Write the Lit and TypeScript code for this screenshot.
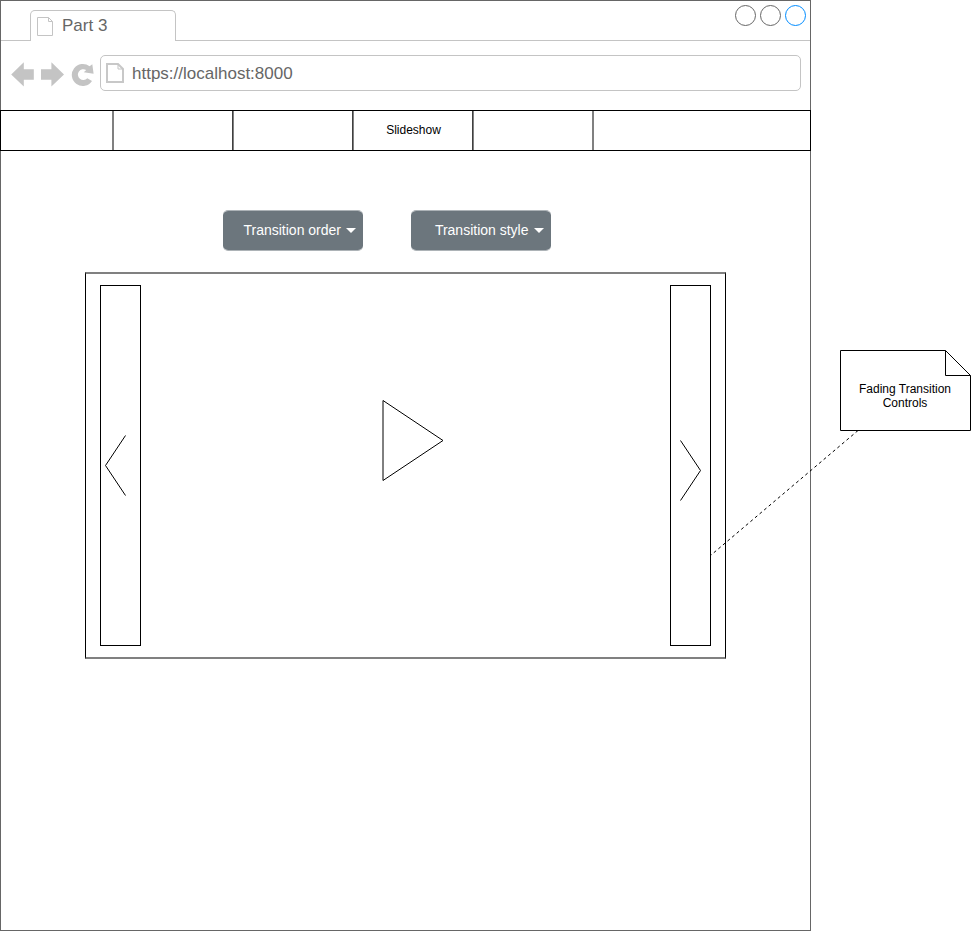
import { LitElement, html, css } from "lit";
import { customElement, property } from "lit/decorators.js";

@customElement("page-icon")
class PageIcon extends LitElement {
  @property({ type: Boolean }) bold = false;
  static styles = css`
    :host { display: block; line-height: 0; }
    svg { display: block; overflow: visible; }
    path { fill: none; stroke: #c4c4c4; }
    .heavy { stroke: #c8c8c8; }
  `;
  render() {
    return this.bold
      ? html`<svg width="18" height="20"><path class="heavy" stroke-width="2" d="M1 1H12L17 6V19H1Z"></path><path d="M12 1V6H17"></path></svg>`
      : html`<svg width="16" height="19"><path d="M.5 .5H11.5L15.5 4.5V18.5H.5ZM11.5 .5V4.5H15.5"></path></svg>`;
  }
}

@customElement("drop-button")
class DropButton extends LitElement {
  @property() label = "";
  static styles = css`
    :host { display: flex; box-sizing: border-box; width: 140px; height: 41px; align-items: center; justify-content: flex-end;
      gap: 5px; padding: 0 7px 1px 0; border-radius: 5px; background: #6c767d; color: #fff; font-size: 14px; line-height: 16px;
      border: solid #adb3b7; border-width: 1px 0; background-clip: padding-box; }
    svg { display: block; }
    .label { white-space: nowrap; }
  `;
  render() {
    return html`<span class="label">${this.label}</span>
      <svg width="10" height="5"><path fill="#fff" d="M0 0H10L5 5Z"></path></svg>`;
  }
}

@customElement("app-root")
class AppRoot extends LitElement {
  static styles = css`
    :host { display: block; position: relative; width: 971px; height: 931px; overflow: hidden; background: #fff;
      font-family: "Liberation Sans", Arial, sans-serif; color: #000; }
    * { box-sizing: border-box; }
    svg { display: block; flex: none; }
    .window { width: 811px; height: 931px; border: 1px solid #666; }
    .tabs { display: flex; height: 40px; }
    .line { border-bottom: 1px solid #c4c4c4; }
    .lead { width: 29px; }
    .tab { display: flex; width: 146px; height: 31px; margin-top: 9px; padding: 6px 0 0 6px; gap: 9px;
      border: 1px solid #c4c4c4; border-bottom: 0; border-radius: 5px 5px 0 0; color: #666; font-size: 17px; line-height: 17px; }
    .rest { flex: 1; display: flex; justify-content: flex-end; gap: 4px; padding: 4px 4px 0 0; }
    .dot { width: 21px; height: 21px; border: 1px solid #666; border-radius: 50%; }
    .dot.blue { border-color: #008cff; }
    .toolbar { display: flex; height: 69px; padding: 14px 9px 0 10px; }
    .tools { margin-top: 6px; }
    .address { display: flex; align-items: center; width: 701px; height: 36px; margin-left: 6px; padding-left: 5px; gap: 8px;
      border: 1px solid #c4c4c4; border-radius: 5px; color: #666; font-size: 17px; line-height: 20px; }
    .url { padding-top: 2px; }
    .nav { display: flex; width: 811px; height: 41px; margin-left: -1px; border: 1px solid #000; }
    .cell { width: 120px; border-right: 2px solid #808080; font-size: 12px; line-height: 38px; text-align: center; }
    .cell.first { width: 113px; }
    .cell.dark { border-right-width: 1px; box-shadow: inset -1px 0 #404040; }
    .buttons { display: flex; gap: 47.5px; margin: 59px 0 0 222px; height: 41px; }
    .stage { display: flex; justify-content: space-between; width: 641px; height: 387px; margin: 21px 0 0 84px; padding: 11px 14px 11px;
      border: solid #000; border-width: 2px 1px; border-top-color: #808080; border-bottom-color: #808080; }
    .rail { width: 41px; height: 361px; border: 1px solid #000; }
    .stroke { fill: none; stroke: #000; }
    .play { margin: 114px 0 0 16px; }
    .left { margin: 149px 0 0 4px; }
    .right { margin: 154px 0 0 9px; }
    .note { position: absolute; left: 840px; top: 350px; width: 130px; height: 81px; padding-top: 32px;
      font-size: 12px; line-height: 14px; text-align: center; }
    .fold, .link { position: absolute; }
    .fold { left: 0; top: 0; }
    .link { left: 710px; top: 430px; }
  `;

  render() {
    return html`
      <div class="window">
        <div class="tabs">
          <div class="lead line"></div>
          <div class="tab"><page-icon></page-icon><span>Part 3</span></div>
          <div class="rest line">
            <div class="dot"></div><div class="dot"></div><div class="dot blue"></div>
          </div>
        </div>
        <div class="toolbar">
          <svg class="tools" width="83" height="28" fill="#c4c4c4">
            <path d="M.2 13.5L12.8 1.2V8.2H22.8V18.8H12.8V25.6Z"></path>
            <path d="M53 13.5L40.4 1.2V8.2H30V18.8H40.4V25.6Z"></path>
            <path d="M81 20A11 11 0 1 1 78.6 5.3L81.3 3.2L82.6 12.7L72.8 11.3L75.2 9A5.4 5.4 0 1 0 76.3 17.2Z"></path>
          </svg>
          <div class="address"><page-icon bold></page-icon><span class="url">https://localhost:8000</span></div>
        </div>
        <div class="nav">
          <div class="cell first"></div>
          <div class="cell dark"></div>
          <div class="cell dark"></div>
          <div class="cell dark">Slideshow</div>
          <div class="cell"></div>
        </div>
        <div class="buttons">
          <drop-button label="Transition order"></drop-button>
          <drop-button label="Transition style"></drop-button>
        </div>
        <div class="stage">
          <div class="rail"><svg class="left stroke" width="22" height="62"><path d="M20.5 .5L.5 30.5L20.5 60.5"></path></svg></div>
          <svg class="play" width="64" height="84">
            <path class="stroke" d="M1 1.5L61 41.5L1 81.5Z"></path>
          </svg>
          <div class="rail"><svg class="right stroke" width="22" height="62"><path d="M.5 .5L20.5 30.5L.5 60.5"></path></svg></div>
        </div>
      </div>
      <svg class="link" width="150" height="127">
        <path class="stroke" stroke-dasharray="3 3" d="M148 .5L.5 125.5"></path>
      </svg>
      <div class="note">
        <svg class="fold" width="131" height="81">
          <path class="stroke" d="M.5 .5H105.5L130.5 25.5V80.5H.5ZM105.5 .5V25.5H130.5"></path>
        </svg>
        Fading Transition<br />Controls
      </div>
    `;
  }
}
